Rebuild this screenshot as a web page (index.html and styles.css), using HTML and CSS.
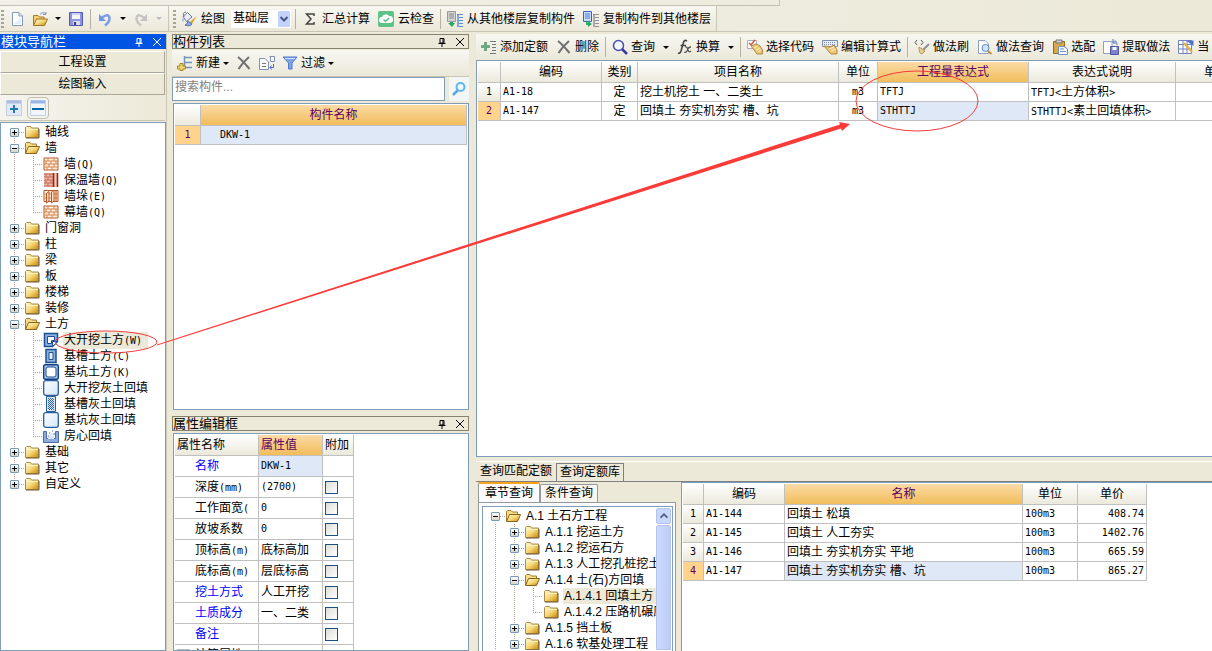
FILE: index.html
```html
<!DOCTYPE html>
<html lang="zh-CN">
<head>
<meta charset="utf-8">
<title>绘图输入</title>
<link rel="stylesheet" href="styles.css">
</head>
<body>
<svg class="defs" aria-hidden="true">
  <defs>
    <linearGradient id="gold" x1="0" y1="0" x2="1" y2="1"><stop offset="0" stop-color="#fff9d0"/><stop offset=".5" stop-color="#f7d878"/><stop offset="1" stop-color="#c98500"/></linearGradient>
    <linearGradient id="pit" x1="0" y1="0" x2="1" y2="1"><stop offset="0" stop-color="#fff"/><stop offset="1" stop-color="#d3e3f8"/></linearGradient>
    <symbol id="folder" viewBox="0 0 16 16"><path d="M1.5 13.500V3.500L2.500 2.500H6.500L7.500 4H14.500V13.500Z" fill="url(#gold)" stroke="#aa8c50"/><path d="M2 5.500H14" stroke="#fff5c4"/><path d="M2 14H15V5" fill="none" stroke="#6f5a2c"/></symbol>
    <symbol id="folder-open" viewBox="0 0 16 16"><path d="M1.500 13V3.500L2.500 2.500H6L7.500 4H12.500V6.500" fill="#f7dc83" stroke="#9c7c37"/><path d="M1.500 13.500L4.500 6.500H15.500L12.500 13.500Z" fill="url(#gold)" stroke="#87631f"/></symbol>
    <symbol id="brick" viewBox="0 0 16 16"><path d="M1 2H15V14H1Z" fill="#fff0df" stroke="#b5582c"/><path d="M1 5H15M1 8H15M1 11H15M5 2V5M11 2V5M3 5V8M8 5V8M13 5V8M6 8V11M11 8V11M4 11V14M9 11V14" stroke="#d4834f" fill="none"/></symbol>
    <symbol id="brick-ins" viewBox="0 0 16 16"><path d="M1 1H15V15H1Z" fill="#eebaa8"/><path d="M1 2H10M1 5H10M1 8H10M1 11H10M1 14H10M3 2V5M7 2V5M5 5V8M3 8V11M8 8V11M5 11V14" stroke="#c46a5a" fill="none"/><path d="M10.500 1V15M14.500 1V15" stroke="#9c1f12" stroke-width="1.500"/><path d="M12.500 2V14" stroke="#fbd3bd"/></symbol>
    <symbol id="brick-pier" viewBox="0 0 16 16"><path d="M1 2.500H15V13.500H1Z" fill="#fff0df" stroke="#b5582c"/><path d="M1 6H15M1 10H15" stroke="#d4834f"/><path d="M3.500 5.500L6 3.500V13L3.500 15ZM8.500 4L11 2V13L8.500 15Z" fill="#fbe0c9" stroke="#c2501e"/><path d="M13 3V13" stroke="#c2501e"/></symbol>
    <symbol id="pit-open" viewBox="0 0 16 16"><path d="M1.500 1.500H14.500V9.500L9.500 14.500H1.500Z" fill="#8db1dc" stroke="#1b4f94" stroke-width="1.500"/><path d="M4.500 4.500H11.500V8.500H8.500V11.500H4.500Z" fill="#fff" stroke="#1b4f94"/><path d="M9.500 14.500V9.500H14.500Z" fill="#fff" stroke="#1b4f94"/></symbol>
    <symbol id="pit-slot" viewBox="0 0 16 16"><path d="M3 1.500H13V14.500H3Z" fill="#8db1dc" stroke="#1b4f94" stroke-width="1.500"/><path d="M6 4.500H10V11.500H6Z" fill="#e8f2ff" stroke="#1b4f94"/></symbol>
    <symbol id="pit-square" viewBox="0 0 16 16"><rect x=".7" y=".7" width="14.600" height="14.600" rx="1.500" fill="#a9c6ea" stroke="#123f80" stroke-width="1.400"/><rect x="3" y="3" width="10" height="10" rx="2" fill="#fff" stroke="#1b4f94"/></symbol>
    <symbol id="fill-square" viewBox="0 0 16 16"><rect x=".7" y=".7" width="14.600" height="14.600" rx="2" fill="url(#pit)" stroke="#285f9f" stroke-width="1.300"/></symbol>
    <symbol id="fill-slot" viewBox="0 0 16 16"><path d="M3.500 .5H12.500V15.500H3.500Z" fill="#d9e6f8" stroke="#285f9f"/><path d="M5.500 2V14M7.500 2V14M9.500 2V14" stroke="#2e629e" stroke-dasharray="1 1"/><path d="M6.500 3V14M8.500 3V14M10.500 3V14" stroke="#2e629e" stroke-dasharray="1 1"/></symbol>
    <symbol id="fill-room" viewBox="0 0 16 16"><path d="M.5 3.500H3.500V10.500H12.500V3.500H15.500V14.500H.5Z" fill="#8eaadd" stroke="#4c6cab"/><path d="M4 7L6 9L8 5L11 8V11H5Z" fill="#dce6f8"/><path d="M6 5H7M9 3H10M10 6H12M5 8H6" stroke="#4c6cab"/></symbol>
    <symbol id="new" viewBox="0 0 16 16"><path d="M3.500 1.500H10L13.500 5V14.500H3.500Z" fill="#fbfdff" stroke="#8398bd"/><path d="M10 1.500V5H13.500" fill="#dae5fa" stroke="#8398bd"/><path d="M5 13H12V7Z" fill="#e3ecfb"/></symbol>
    <symbol id="open" viewBox="0 0 16 16"><path d="M1.500 14V4.500H6L7.500 6H12V8" fill="#f5cf70" stroke="#a87a27"/><path d="M1.500 14.500L4.500 8H15.500L12.500 14.500Z" fill="url(#gold)" stroke="#9b7326"/><path d="M8 3.500Q11 0 14 3V1M14 3.500H11" fill="none" stroke="#7892b8"/></symbol>
    <symbol id="save" viewBox="0 0 16 16"><path d="M1.500 1.500H14.500V14.500H1.500Z" fill="#8f94e0" stroke="#5558ae"/><path d="M4 2H12V8H4Z" fill="#f5f7ff"/><path d="M4 3H12" stroke="#9caff0"/><path d="M5 10H12V14H5Z" fill="#d8dce9"/><path d="M6 11H8V14H6Z" fill="#343a83"/></symbol>
    <symbol id="undo" viewBox="0 0 16 16"><path d="M5 6.500Q12 1.500 12.500 7.500Q12.500 11 8 14.500" fill="none" stroke="#7b9be4" stroke-width="2.500"/><path d="M2 3V10H9Z" fill="#6f95e5"/></symbol>
    <symbol id="redo" viewBox="0 0 16 16"><path d="M11 6.500Q4 1.500 3.500 7.500Q3.500 11 8 14.500" fill="none" stroke="#c6c6c6" stroke-width="2.500"/><path d="M14 3V10H7Z" fill="#c2c2c2"/></symbol>
    <symbol id="paint" viewBox="0 0 16 16"><path d="M2 5.500L6.500 1.500L11 6L5.500 10.500Z" fill="#e8edf6" stroke="#68799a"/><path d="M3 6Q1 1 5 1" fill="none" stroke="#68799a"/><path d="M2 7Q.5 9 2 11Q3.500 9 2 7" fill="#6e9de0"/><path d="M15.500 5L9 11L11 13Z" fill="#d8a02b"/><path d="M7 10L11 13Q9 16 4 14Q7 13 7 10Z" fill="#8dabe2" stroke="#4d6fb1"/></symbol>
    <symbol id="sigma" viewBox="0 0 16 16"><path d="M12 5V3H4.500L9 8L4.500 13H12V11" fill="none" stroke="#444" stroke-width="1.500"/></symbol>
    <symbol id="cloud" viewBox="0 0 16 16"><rect width="16" height="16" rx="2" fill="#5dc286"/><path d="M4 12A3 3 0 0 1 4 6A4 4 0 0 1 11 5A3.500 3.500 0 0 1 12 12Z" fill="#fff"/><path d="M5.500 8.500L7.500 10.500L11 7" fill="none" stroke="#5dc286" stroke-width="1.500"/></symbol>
    <symbol id="copy-from" viewBox="0 0 16 16"><path d="M.5 .5H8.500V10.500H.5Z" fill="#d4d4d4" stroke="#999"/><path d="M2 3H7M2 5H7M2 7H7" stroke="#888"/><path d="M10 3.500H16M10 6.500H16M10 9.500H16M10 12.500H16M10 15.500H16" stroke="#5d8bd0"/><path d="M11 4V16" stroke="#7ea6e2" stroke-width="2"/><path d="M3 11V12H1L5 16L8 12H6V11Z" fill="#2aa866"/></symbol>
    <symbol id="copy-to" viewBox="0 0 16 16"><path d="M.5 .5H8.500V10.500H.5Z" fill="#c9dbfd" stroke="#3766b8"/><path d="M2 3H7M2 5H7M2 7H7" stroke="#477ed1"/><path d="M10 3.500H16M10 6.500H16M10 9.500H16M10 12.500H16M10 15.500H16" stroke="#919191"/><path d="M11 4V16" stroke="#aaa" stroke-width="2"/><path d="M3 10V14H5V16L9 13L5 10V12Z" fill="#2aa866"/></symbol>
    <symbol id="add-list" viewBox="0 0 16 16"><path d="M3 3H6V6H9V9H6V12H3V9H0V6H3Z" fill="#6da883"/><path d="M9 2.500H15M11 5.500H15M11 8.500H15M11 11.500H15M9 14.500H15" stroke="#777"/></symbol>
    <symbol id="create" viewBox="0 0 16 16"><path d="M7.500 1V13M8 2.500H15M8 7.500H15M8 12.500H15" stroke="#7194bd" stroke-width="1.500" fill="none"/><path d="M3 8.500H6V11H8.500V14H6V15.500H3V14H.5V11H3Z" fill="#f0d469" stroke="#a68527"/></symbol>
    <symbol id="cross" viewBox="0 0 16 16"><path d="M2 2Q7 6 13.500 14M13 2Q7 7 2.500 14" fill="none" stroke="#707070" stroke-width="2"/></symbol>
    <symbol id="duplicate" viewBox="0 0 16 16"><path d="M.5 3.500H6L9.500 7V14.500H.5Z" fill="#f9fbff" stroke="#8191b5"/><path d="M3 8.500H7M3 11.500H7" stroke="#777"/><path d="M10.500 1.500H15.500V6.500H11.500V1.500" fill="#f9fbff" stroke="#8191b5"/><path d="M14.500 9V12.500H11M12.500 10.500L11 12.500L12.500 14.500" fill="none" stroke="#4766d0"/></symbol>
    <symbol id="funnel" viewBox="0 0 16 16"><path d="M1 2H15L10 8V14H6.500V8Z" fill="#7ca3ee" stroke="#4e78c8"/><path d="M3 3.500H13" stroke="#d5e4ff"/></symbol>
    <symbol id="search" viewBox="0 0 16 16"><circle cx="6.500" cy="6.500" r="5" fill="#f4f7ff" stroke="#4451ad" stroke-width="1.500"/><path d="M10 10L15 15" stroke="#3a3a9c" stroke-width="2.500"/></symbol>
    <symbol id="find" viewBox="0 0 16 16"><path d="M7 9L2 14" stroke="#58a8e4" stroke-width="2.500"/><circle cx="9.500" cy="6" r="4" fill="#edfaff" stroke="#62b4ea" stroke-width="2"/></symbol>
    <symbol id="fx" viewBox="0 0 16 16"><path d="M10 2Q7 0 6 5L4 12Q3 15 1 14M3.500 6.500H9" fill="none" stroke="#444" stroke-width="1.600"/><path d="M8 8Q10 7 11 11Q12 14 14 12M14 8Q11 8 10 12Q9 14 7 13" fill="none" stroke="#555" stroke-width="1.300"/></symbol>
    <symbol id="pick" viewBox="0 0 16 16"><path d="M.5 1.500H9.500V9.500H.5Z" fill="#fff" stroke="#a9aeba"/><path d="M2 4L4 6L8 1" fill="none" stroke="#d75540" stroke-width="1.500"/><path d="M4 7L9 5L13 7L15.500 11V15H10Z" fill="#eac678" stroke="#ae8748"/><path d="M7 9L11 7M9 11L13 9M11 13L14 11" stroke="#fff0b9"/></symbol>
    <symbol id="edit-formula" viewBox="0 0 16 16"><path d="M.5 1.500H15.500V7.500H.5Z" fill="#e8effa" stroke="#7d8ca8"/><path d="M2 3.500H14M2 5.500H14" stroke="#7d8ca8" stroke-dasharray="1 1"/><path d="M2 7L8 8L12 6L15 11V15H9Z" fill="#eac678" stroke="#ae8748"/><path d="M7 10L12 8M9 12L14 10" stroke="#fff0b9"/></symbol>
    <symbol id="brush" viewBox="0 0 16 16"><path d="M3 1L1 3.500L3 6M7 1L9 3.500L7 6" fill="none" stroke="#555"/><path d="M15 5L9 11" stroke="#8c8f98" stroke-width="2"/><path d="M5 8L11 12L8 15Q5 15 5 8Z" fill="#e9cf8c" stroke="#b29857"/></symbol>
    <symbol id="doc-search" viewBox="0 0 16 16"><path d="M1.500 1.500H8L11.500 5V14.500H1.500Z" fill="#fff" stroke="#8ca0c4"/><circle cx="8.500" cy="9" r="3.500" fill="#cfe5fb" stroke="#608bc0"/><path d="M11 12L14.500 15" stroke="#c59339" stroke-width="2"/></symbol>
    <symbol id="paste" viewBox="0 0 16 16"><path d="M1.500 2.500H12.500V14.500H1.500Z" fill="#d8a844" stroke="#946b1e"/><path d="M4 1H10V4H4Z" fill="#ccc" stroke="#777"/><path d="M6.500 7.500H12L15.500 10V15.500H6.500Z" fill="#f4f8ff" stroke="#7190c3"/><path d="M8 10H12M8 12.500H14" stroke="#7190c3"/></symbol>
    <symbol id="extract" viewBox="0 0 16 16"><path d="M.5 2.500H9V14.500H.5Z" fill="#fff" stroke="#89a0cb"/><path d="M7.500 7.500H15.500V15.500H7.500Z" fill="#7c82cd" stroke="#4f559f"/><path d="M9.500 8H13.500V11H9.500Z" fill="#fff"/><path d="M10 3Q14 0 14 6M10 0V4H13" fill="none" stroke="#5577b7"/></symbol>
    <symbol id="grid-edit" viewBox="0 0 16 16"><path d="M.5 1.500H13.500V14.500H.5Z" fill="#fff" stroke="#7184be"/><path d="M.5 5.500H13.500M.5 10H13.500M5 1.500V14.500M9 1.500V14.500" stroke="#7184be"/><path d="M8 1.500H15.500V7Z" fill="#526fd0"/><path d="M6 4L14 13" stroke="#e2b34a" stroke-width="2.500"/></symbol>
    <symbol id="pin" viewBox="0 0 10 10"><path d="M3 1.500H7V6H3ZM6 1V6M1.500 6.500H8.500M5 7V10" fill="none" stroke="currentColor"/></symbol>
    <symbol id="close" viewBox="0 0 10 10"><path d="M1 1L9 9M9 1L1 9" stroke="currentColor" fill="none"/></symbol>
    <symbol id="expand" viewBox="0 0 16 16"><path d="M.5 .5H15.500V15.500H.5Z" fill="#e1e8f8" stroke="#c4cee2"/><path d="M1 2H15" stroke="#a9bddf" stroke-width="3"/><path d="M8 5V13M4 9H12" stroke="#2479b5" stroke-width="2"/></symbol>
    <symbol id="collapse" viewBox="0 0 16 16"><path d="M.5 .5H15.500V15.500H.5Z" fill="#f2f5fc" stroke="#c4cee2"/><path d="M1 2H15" stroke="#9ab7ec" stroke-width="3"/><path d="M2 9H14" stroke="#0a67a8" stroke-width="2"/></symbol>
  </defs>
</svg>

<header class="top">
  <div class="menu-strip"></div>
  <div class="bars">
    <div class="bar file-bar">
      <i class="grip"></i>
      <button class="tool" aria-label="新建"><svg class="ic"><use href="#new"/></svg></button>
      <button class="tool" aria-label="打开"><svg class="ic"><use href="#open"/></svg><i class="caret"></i></button>
      <button class="tool" aria-label="保存"><svg class="ic"><use href="#save"/></svg></button>
      <i class="sep"></i>
      <button class="tool" aria-label="撤销"><svg class="ic"><use href="#undo"/></svg><i class="caret"></i></button>
      <button class="tool" aria-label="恢复"><svg class="ic"><use href="#redo"/></svg><i class="caret dim"></i></button>
    </div>
    <div class="bar draw-bar">
      <i class="grip"></i>
      <button class="tool"><svg class="ic"><use href="#paint"/></svg>绘图</button>
      <select class="floor" aria-label="楼层"><option>基础层</option></select>
      <i class="sep"></i>
      <button class="tool"><svg class="ic"><use href="#sigma"/></svg>汇总计算</button>
      <button class="tool"><svg class="ic"><use href="#cloud"/></svg>云检查</button>
      <i class="sep"></i>
      <button class="tool"><svg class="ic"><use href="#copy-from"/></svg>从其他楼层复制构件</button>
      <button class="tool"><svg class="ic"><use href="#copy-to"/></svg>复制构件到其他楼层</button>
    </div>
  </div>
</header>

<div class="work">
  <nav class="nav">
    <div class="dock-title active"><h2>模块导航栏</h2><button aria-label="固定"><svg><use href="#pin"/></svg></button><button aria-label="关闭"><svg><use href="#close"/></svg></button></div>
    <button class="nav-section">工程设置</button>
    <button class="nav-section">绘图输入</button>
    <div class="nav-tools">
      <button aria-label="展开"><svg class="ic"><use href="#expand"/></svg></button>
      <button class="on" aria-label="折叠"><svg class="ic"><use href="#collapse"/></svg></button>
    </div>
    <ul class="tree box">
      <li><i class="g v first"><b class="tg plus"></b></i><svg class="ic"><use href="#folder"/></svg><span>轴线</span></li>
      <li><i class="g v"><b class="tg"></b></i><svg class="ic"><use href="#folder-open"/></svg><span>墙</span></li>
      <li><i class="g v"></i><i class="g v h"></i><svg class="ic"><use href="#brick"/></svg><span>墙<span class="m">(Q)</span></span></li>
      <li><i class="g v"></i><i class="g v h"></i><svg class="ic"><use href="#brick-ins"/></svg><span>保温墙<span class="m">(Q)</span></span></li>
      <li><i class="g v"></i><i class="g v h"></i><svg class="ic"><use href="#brick-pier"/></svg><span>墙垛<span class="m">(E)</span></span></li>
      <li><i class="g v"></i><i class="g v h last"></i><svg class="ic"><use href="#brick"/></svg><span>幕墙<span class="m">(Q)</span></span></li>
      <li><i class="g v"><b class="tg plus"></b></i><svg class="ic"><use href="#folder"/></svg><span>门窗洞</span></li>
      <li><i class="g v"><b class="tg plus"></b></i><svg class="ic"><use href="#folder"/></svg><span>柱</span></li>
      <li><i class="g v"><b class="tg plus"></b></i><svg class="ic"><use href="#folder"/></svg><span>梁</span></li>
      <li><i class="g v"><b class="tg plus"></b></i><svg class="ic"><use href="#folder"/></svg><span>板</span></li>
      <li><i class="g v"><b class="tg plus"></b></i><svg class="ic"><use href="#folder"/></svg><span>楼梯</span></li>
      <li><i class="g v"><b class="tg plus"></b></i><svg class="ic"><use href="#folder"/></svg><span>装修</span></li>
      <li><i class="g v"><b class="tg"></b></i><svg class="ic"><use href="#folder-open"/></svg><span>土方</span></li>
      <li><i class="g v"></i><i class="g v h"></i><svg class="ic"><use href="#pit-open"/></svg><span class="sel">大开挖土方<span class="m">(W)</span></span></li>
      <li><i class="g v"></i><i class="g v h"></i><svg class="ic"><use href="#pit-slot"/></svg><span>基槽土方<span class="m">(C)</span></span></li>
      <li><i class="g v"></i><i class="g v h"></i><svg class="ic"><use href="#pit-square"/></svg><span>基坑土方<span class="m">(K)</span></span></li>
      <li><i class="g v"></i><i class="g v h"></i><svg class="ic"><use href="#fill-square"/></svg><span>大开挖灰土回填</span></li>
      <li><i class="g v"></i><i class="g v h"></i><svg class="ic"><use href="#fill-slot"/></svg><span>基槽灰土回填</span></li>
      <li><i class="g v"></i><i class="g v h"></i><svg class="ic"><use href="#fill-square"/></svg><span>基坑灰土回填</span></li>
      <li><i class="g v"></i><i class="g v h last"></i><svg class="ic"><use href="#fill-room"/></svg><span>房心回填</span></li>
      <li><i class="g v"><b class="tg plus"></b></i><svg class="ic"><use href="#folder"/></svg><span>基础</span></li>
      <li><i class="g v"><b class="tg plus"></b></i><svg class="ic"><use href="#folder"/></svg><span>其它</span></li>
      <li><i class="g v last"><b class="tg plus"></b></i><svg class="ic"><use href="#folder"/></svg><span>自定义</span></li>
    </ul>
  </nav>

  <aside class="parts">
    <section class="part-list">
      <div class="dock-title"><h2>构件列表</h2><button aria-label="固定"><svg><use href="#pin"/></svg></button><button aria-label="关闭"><svg><use href="#close"/></svg></button></div>
      <div class="tools part-tools">
        <button class="tool"><svg class="ic"><use href="#create"/></svg>新建<i class="caret"></i></button>
        <button class="tool" aria-label="删除"><svg class="ic"><use href="#cross"/></svg></button>
        <button class="tool" aria-label="复制"><svg class="ic"><use href="#duplicate"/></svg></button>
        <button class="tool"><svg class="ic"><use href="#funnel"/></svg>过滤<i class="caret"></i></button>
      </div>
      <div class="search">
        <input type="text" placeholder="搜索构件..." aria-label="搜索构件">
        <button aria-label="搜索"><svg class="ic"><use href="#find"/></svg></button>
      </div>
      <div class="box grow">
        <table class="grid full">
          <colgroup><col class="w-26"><col></colgroup>
          <tr><th></th><th class="hot">构件名称</th></tr>
          <tr><th class="hot-row">1</th><td class="cur deep m">DKW-1</td></tr>
        </table>
      </div>
    </section>
    <section class="props">
      <div class="dock-title"><h2>属性编辑框</h2><button aria-label="固定"><svg><use href="#pin"/></svg></button><button aria-label="关闭"><svg><use href="#close"/></svg></button></div>
      <div class="box grow">
        <table class="grid prop-grid">
          <colgroup><col class="w-84"><col class="w-64"><col class="w-31"></colgroup>
          <tr><th>属性名称</th><th class="hot">属性值</th><th>附加</th></tr>
          <tr><td class="link">名称</td><td class="cur m">DKW-1</td><td></td></tr>
          <tr><td>深度<span class="m">(mm)</span></td><td class="m">(2700)</td><td><input type="checkbox" aria-label="深度"></td></tr>
          <tr><td>工作面宽<span class="m">(</span></td><td class="m">0</td><td><input type="checkbox" aria-label="工作面宽"></td></tr>
          <tr><td>放坡系数</td><td class="m">0</td><td><input type="checkbox" aria-label="放坡系数"></td></tr>
          <tr><td>顶标高<span class="m">(m)</span></td><td>底标高加</td><td><input type="checkbox" aria-label="顶标高"></td></tr>
          <tr><td>底标高<span class="m">(m)</span></td><td>层底标高</td><td><input type="checkbox" aria-label="底标高"></td></tr>
          <tr><td class="link">挖土方式</td><td>人工开挖</td><td><input type="checkbox" aria-label="挖土方式"></td></tr>
          <tr><td class="link">土质成分</td><td>一、二类</td><td><input type="checkbox" aria-label="土质成分"></td></tr>
          <tr><td class="link">备注</td><td></td><td><input type="checkbox" aria-label="备注"></td></tr>
          <tr><td class="group"><b class="fold"></b>计算属性</td><td></td><td></td></tr>
        </table>
      </div>
    </section>
  </aside>

  <main class="main">
    <div class="tools main-tools">
      <button class="tool"><svg class="ic"><use href="#add-list"/></svg>添加定额</button>
      <button class="tool"><svg class="ic"><use href="#cross"/></svg>删除</button>
      <i class="sep"></i>
      <button class="tool"><svg class="ic"><use href="#search"/></svg>查询<i class="caret"></i></button>
      <button class="tool"><svg class="ic"><use href="#fx"/></svg>换算<i class="caret"></i></button>
      <i class="sep"></i>
      <button class="tool"><svg class="ic"><use href="#pick"/></svg>选择代码</button>
      <button class="tool"><svg class="ic"><use href="#edit-formula"/></svg>编辑计算式</button>
      <i class="sep"></i>
      <button class="tool"><svg class="ic"><use href="#brush"/></svg>做法刷</button>
      <button class="tool"><svg class="ic"><use href="#doc-search"/></svg>做法查询</button>
      <button class="tool"><svg class="ic"><use href="#paste"/></svg>选配</button>
      <button class="tool"><svg class="ic"><use href="#extract"/></svg>提取做法</button>
      <button class="tool"><svg class="ic"><use href="#grid-edit"/></svg>当</button>
    </div>
    <div class="box main-box">
      <table class="grid main-grid">
        <colgroup><col class="w-23"><col class="w-101"><col class="w-36"><col class="w-201"><col class="w-39"><col class="w-151"><col class="w-147"><col class="w-81"></colgroup>
        <tr><th></th><th>编码</th><th>类别</th><th>项目名称</th><th>单位</th><th class="hot">工程量表达式</th><th>表达式说明</th><th>单价</th></tr>
        <tr><th class="m">1</th><td class="m">A1-18</td><td class="mid">定</td><td>挖土机挖土 一、二类土</td><td class="mid m">m3</td><td class="m">TFTJ</td><td><span class="m">TFTJ&lt;</span>土方体积<span class="m">&gt;</span></td><td></td></tr>
        <tr><th class="m hot-row">2</th><td class="m">A1-147</td><td class="mid">定</td><td>回填土 夯实机夯实 槽、坑</td><td class="mid m">m3</td><td class="cur m">STHTTJ</td><td><span class="m">STHTTJ&lt;</span>素土回填体积<span class="m">&gt;</span></td><td></td></tr>
      </table>
    </div>
    <section class="lookup">
      <div class="tabs"><button class="tab on">查询匹配定额</button><button class="tab">查询定额库</button></div>
      <div class="lookup-body">
        <div class="chapters">
          <div class="subtabs"><button class="subtab on">章节查询</button><button class="subtab">条件查询</button></div>
          <div class="chapter-frame">
            <div class="box chapter-box">
              <ul class="tree">
                <li><i class="g"><b class="tg"></b></i><svg class="ic"><use href="#folder-open"/></svg><span>A.1 土石方工程</span></li>
                <li><i class="g v"></i><i class="g v"><b class="tg plus"></b></i><svg class="ic"><use href="#folder"/></svg><span>A.1.1 挖运土方</span></li>
                <li><i class="g v"></i><i class="g v"><b class="tg plus"></b></i><svg class="ic"><use href="#folder"/></svg><span>A.1.2 挖运石方</span></li>
                <li><i class="g v"></i><i class="g v"><b class="tg plus"></b></i><svg class="ic"><use href="#folder"/></svg><span>A.1.3 人工挖孔桩挖土</span></li>
                <li><i class="g v"></i><i class="g v"><b class="tg"></b></i><svg class="ic"><use href="#folder-open"/></svg><span>A.1.4 土(石)方回填</span></li>
                <li><i class="g v"></i><i class="g v"></i><i class="g v h"></i><svg class="ic"><use href="#folder"/></svg><span class="sel">A.1.4.1 回填土方</span></li>
                <li><i class="g v"></i><i class="g v"></i><i class="g v h last"></i><svg class="ic"><use href="#folder"/></svg><span>A.1.4.2 压路机碾压</span></li>
                <li><i class="g v"></i><i class="g v"><b class="tg plus"></b></i><svg class="ic"><use href="#folder"/></svg><span>A.1.5 挡土板</span></li>
                <li><i class="g v"></i><i class="g v"><b class="tg plus"></b></i><svg class="ic"><use href="#folder"/></svg><span>A.1.6 软基处理工程</span></li>
              </ul>
              <div class="scroll"><button aria-label="向上滚动"><svg viewBox="0 0 14 14"><path d="M3 9L7 5L11 9" fill="none" stroke="#4d6185" stroke-width="2"/></svg></button><i class="thumb"></i></div>
            </div>
          </div>
        </div>
        <div class="box quota-box">
          <table class="grid quota-grid">
            <colgroup><col class="w-21"><col class="w-81"><col class="w-238"><col class="w-55"><col class="w-69"></colgroup>
            <tr><th></th><th>编码</th><th class="hot">名称</th><th>单位</th><th>单价</th></tr>
            <tr><th class="m">1</th><td class="m">A1-144</td><td>回填土 松填</td><td class="m">100m3</td><td class="num m">408.74</td></tr>
            <tr><th class="m">2</th><td class="m">A1-145</td><td>回填土 人工夯实</td><td class="m">100m3</td><td class="num m">1402.76</td></tr>
            <tr><th class="m">3</th><td class="m">A1-146</td><td>回填土 夯实机夯实 平地</td><td class="m">100m3</td><td class="num m">665.59</td></tr>
            <tr><th class="m hot-row">4</th><td class="m">A1-147</td><td class="cur">回填土 夯实机夯实 槽、坑</td><td class="m">100m3</td><td class="num m">865.27</td></tr>
          </table>
        </div>
      </div>
    </section>
  </main>
</div>

<svg class="marks" aria-hidden="true">
  <ellipse cx="106" cy="342" rx="51" ry="11" fill="none" stroke="#f33c3c"/>
  <ellipse cx="917" cy="101" rx="61" ry="30" fill="none" stroke="#f33c3c"/>
  <path d="M157 344.500L840 124.500L839 122L850 124L842 131L841 128.500L157 345.500Z" fill="#fb3b38"/>
</svg>
</body>
</html>
```

FILE: styles.css
```css
* { box-sizing: border-box; }

body {
  margin: 0;
  height: 100vh;
  display: flex;
  flex-direction: column;
  overflow: hidden;
  background: #ece9d8;
  color: #000;
  font: 12px/16px "Liberation Sans", "Noto Sans CJK SC", sans-serif;
}

button, input, select { font: inherit; color: inherit; margin: 0; }
button { background: none; border: 0; padding: 0; white-space: nowrap; }
ul { list-style: none; margin: 0; padding: 0; }
i, b { font-style: normal; flex: none; }
svg { display: block; flex: none; }
.defs { position: absolute; width: 0; height: 0; }
.ic { width: 16px; height: 16px; }
.m { font-family: "DejaVu Sans Mono", "Noto Sans CJK SC", monospace; font-size: 10px; }

.box { background: #fff; border: 1px solid #7f9db9; padding: 1px; overflow: hidden; }
.grow { flex: 1; min-height: 0; }

/* top bars */
.top { flex: none; background: linear-gradient(90deg, #f1f0e8, #ece9d8); }
.menu-strip { width: 780px; height: 6px; border: solid #c5c2b4; border-width: 0 1px 1px 0; }
.bars { display: flex; height: 26px; border-bottom: 1px solid #c9c6b6; }
.bar { display: flex; align-items: center; border-right: 1px solid #c9c6b6; background: linear-gradient(#f8f7f1, #ebe8d9); }
.file-bar { width: 169px; padding-left: 1px; gap: 1px; }
.draw-bar { padding: 0 1px 0 4px; }
.grip { width: 3px; height: 18px; margin-right: 1px; background: repeating-linear-gradient(#a8a595 0 2px, transparent 2px 4px); }
.tool { display: flex; align-items: center; height: 22px; padding: 0 4px; gap: 4px; }
.sep { width: 1px; height: 20px; margin: 0 2px; background: #b5b2a2; }
.caret { border: 3px solid transparent; border-top-color: #000; border-bottom: 0; }
.caret.dim { border-top-color: #bbb; }
.file-bar .tool { padding: 0 3px; gap: 7px; }
.floor {
  width: 60px; height: 18px; margin: 0 2px; padding: 0 0 2px 1px;
  border: 1px solid #fff; border-radius: 0; appearance: none; line-height: 14px;
  background: url("data:image/svg+xml,%3Csvg xmlns='http://www.w3.org/2000/svg' width='12' height='16'%3E%3Crect width='12' height='16' rx='1' fill='%23c3d3fb'/%3E%3Cpath d='M2.500 6L6 9.500L9.500 6' fill='none' stroke='%23425b85' stroke-width='2'/%3E%3C/svg%3E") right center no-repeat #fff;
}

/* docking layout */
.work { flex: 1; min-height: 0; display: flex; padding-top: 2px; }
.nav { flex: none; width: 167px; display: flex; flex-direction: column; border-right: 1px solid #c9c6b6; }
.parts { flex: none; width: 297px; margin-left: 5px; display: flex; flex-direction: column; gap: 6px; }
.main { flex: 1; min-width: 0; margin-left: 7px; display: flex; flex-direction: column; }

.dock-title { flex: none; display: flex; align-items: center; height: 15px; border: 1px solid #85836f; padding-right: 3px; gap: 8px; }
.dock-title h2 { flex: 1; margin: 0; font-size: 13px; line-height: 13px; font-weight: 400; }
.dock-title svg { width: 10px; height: 10px; }
.dock-title.active { background: #0054e3; border-color: #0054e3; color: #fff; }

.nav-section { flex: none; height: 22px; margin-right: 1px; border: 1px solid #aca899; border-left-color: #fff; border-top-color: #fff; line-height: 18px; background: #ece9d8; }
.dock-title + .nav-section { margin-top: 2px; }
.nav-tools { flex: none; height: 26px; margin: 0 1px 1px 0; display: flex; align-items: center; gap: 2px; padding-left: 3px; background: linear-gradient(90deg, #f5f4ee, #ece9d8); border-bottom: 1px solid #c9c6b6; }
.nav-tools button { border: 1px solid transparent; border-radius: 4px; height: 22px; width: 22px; display: grid; place-items: center; }
.nav-tools .on { border-color: #c0bdad; background: #f5f4ed; }

/* trees */
.tree li { display: flex; align-items: center; height: 16px; white-space: nowrap; }
.tree li > span { margin-left: 4px; padding: 0 2px 0 1px; }
.tree .sel { background: #ece9d8; padding-right: 6px; }
.nav > .tree { flex: 1; min-height: 0; padding-left: 4px; }
.g { width: 19px; height: 16px; display: flex; align-items: center; padding-left: 5px; background-repeat: no-repeat; }
.g.v { background-image: repeating-linear-gradient(#aaa79a 0 1px, transparent 1px 2px); background-size: 1px 16px; background-position: 9px 0; }
.g.v.last { background-size: 1px 8px; }
.g.v.first { background-position: 9px 8px; }
.g.h::after, .g:has(.tg)::after { content: ""; flex: 1; height: 1px; background: repeating-linear-gradient(90deg, #aaa79a 0 1px, transparent 1px 2px); }
.g.h::after { margin-left: 4px; }
.tg {
  width: 9px; height: 9px; border: 1px solid #7898b5; border-radius: 1px;
  background: linear-gradient(#000, #000) center / 5px 1px no-repeat, linear-gradient(#fff, #d9d3c3);
}
.tg.plus { background: linear-gradient(#000, #000) center / 5px 1px no-repeat, linear-gradient(#000, #000) center / 1px 5px no-repeat, linear-gradient(#fff, #d9d3c3); }

/* component list */
.part-list { flex: none; height: 61%; max-height: 376px; display: flex; flex-direction: column; }
.props { flex: 1; min-height: 0; display: flex; flex-direction: column; gap: 2px; }
.tools { flex: none; display: flex; align-items: center; background: linear-gradient(#f8f7f1, #ebe8d9); }
.part-tools { height: 27px; margin-top: 1px; padding-left: 2px; gap: 1px; border-bottom: 1px solid #c9c6b6; }
.part-tools .tool { padding: 0 3px; gap: 3px; }
.search { flex: none; display: flex; gap: 4px; height: 24px; margin: 0 0 2px; }
.search input { flex: 1; min-width: 0; border: 1px solid #7f9db9; padding: 0 2px 4px; background: #fff; border-radius: 0; }
.search input::placeholder { color: #808080; opacity: 1; }
.search button { width: 20px; display: grid; place-items: center; background: #f3f6f6; }
.parts .box { margin-left: 1px; }

/* data grids */
.grid { border-collapse: separate; border-spacing: 0; table-layout: fixed; width: 0; }
.grid.full { width: 100%; }
.grid tr { height: 19px; }
.grid tr:first-child { height: 21px; }
.grid th, .grid td { padding: 0 2px; border: solid #c0c0c0; border-width: 0 1px 1px 0; text-align: left; font-weight: 400; line-height: 16px; white-space: nowrap; overflow: hidden; }
.grid th { text-align: center; background: linear-gradient(#fff, #ebe9db); }
.grid th.hot { background: linear-gradient(#fbdba6, #f1bd5b); color: #5a0062; }
.grid th.hot-row { background: #ffd38b; color: #5a0062; font-family: "DejaVu Sans Mono", monospace; font-size: 10px; }
.grid td.cur { background: #dfe8f6; }
.grid td.deep { padding-left: 19px; }
.grid td.mid { text-align: center; }
.grid td.num { text-align: right; }
.prop-grid tr { height: 21px; }
.prop-grid th, .prop-grid tr:first-child th { text-align: left; }
.prop-grid td:first-child { padding-left: 20px; }
.prop-grid .link { color: #00f; }
.prop-grid td.group:first-child { padding-left: 2px; }
.fold { display: inline-block; width: 13px; height: 13px; margin-right: 5px; border: 1px solid #bbb; background: #eee; vertical-align: middle; }
.prop-grid input { display: block; width: 13px; height: 13px; appearance: none; border: 1px solid #1c5180; background: linear-gradient(135deg, #dcdcd7, #fff); }
.w-21 { width: 21px; } .w-23 { width: 23px; } .w-26 { width: 26px; } .w-31 { width: 31px; }
.w-36 { width: 36px; } .w-39 { width: 39px; } .w-55 { width: 55px; } .w-64 { width: 64px; }
.w-69 { width: 69px; } .w-81 { width: 81px; } .w-84 { width: 84px; } .w-101 { width: 101px; }
.w-147 { width: 147px; } .w-151 { width: 151px; } .w-201 { width: 201px; } .w-238 { width: 238px; }

/* main pane */
.main-tools { height: 26px; padding-left: 1px; overflow: hidden; }
.main-tools .tool { gap: 3px; }
.main-tools .caret { margin-left: 5px; }
.main-box { flex: 1; min-height: 0; border-right: 0; }
.lookup { flex: none; height: 190px; margin-top: 4px; border-top: 1px solid #fff; display: flex; flex-direction: column; }
.tabs { flex: none; display: flex; align-items: flex-end; height: 20px; border-bottom: 1px solid #808080; padding-left: 2px; }
.tab { height: 18px; padding: 0 3px; border: 1px solid #808080; border-bottom: 0; line-height: 17px; }
.tab.on { height: 20px; border-color: transparent; padding: 0 3px 0 1px; }
.lookup-body { flex: 1; min-height: 0; display: flex; gap: 5px; }
.chapters { flex: none; width: 200px; display: flex; flex-direction: column; padding: 0 0 0 2px; }
.subtabs { flex: none; display: flex; align-items: flex-end; height: 20px; }
.subtab { height: 18px; padding: 0 4px; border: 1px solid #919b9c; border-bottom: 0; border-radius: 2px 2px 0 0; background: #f7f6f0; line-height: 17px; }
.subtab.on { height: 20px; padding: 0 6px; border-top: 2px solid #f8a41c; background: #fcfcfe; }
.chapter-frame { flex: 1; min-height: 0; display: flex; border: 1px solid #919b9c; border-bottom: 0; background: #fcfcfe; padding: 3px 2px 0 3px; }
.chapter-box { flex: 1; min-width: 0; display: flex; border-bottom: 0; }
.chapter-box .tree { flex: 1; min-width: 0; overflow: hidden; padding-left: 2px; }
.scroll { flex: none; width: 15px; display: flex; flex-direction: column; gap: 1px; }
.scroll button { height: 16px; display: grid; place-items: center; border-radius: 2px; background: #c8d7fc; border: 1px solid #b3c4ef; }
.scroll svg { width: 12px; height: 12px; }
.thumb { flex: 1; border: 1px solid #b3c4ef; border-radius: 2px 2px 0 0; background: linear-gradient(90deg, #cbdafd, #bccdf9); }
.quota-box { flex: 1; min-width: 0; border-right: 0; border-bottom: 0; }

/* drawn over the whole window */
.marks { position: absolute; left: 0; top: 0; width: 100%; height: 100%; pointer-events: none; }
```
